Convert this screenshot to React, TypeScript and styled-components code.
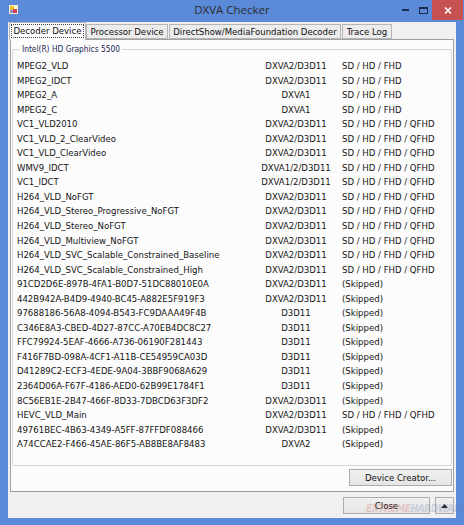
import React from "react";
import styled, { createGlobalStyle } from "styled-components";

const Global = createGlobalStyle`
  html, body { margin: 0; padding: 0; }
  body { width: 464px; height: 525px; overflow: hidden; background: #5a8ad8; }
`;

const UI = `"DejaVu Sans Condensed", "DejaVu Sans", "Liberation Sans", sans-serif`;

const Window = styled.div`
  width: 464px;
  height: 525px;
  box-sizing: border-box;
  background: #5a8ad8;
  padding: 0 8px 7px 8px;
  display: flex;
  flex-direction: column;
  position: relative;
  font-family: ${UI};
  font-stretch: condensed;
`;

const TitleBar = styled.div`
  height: 22px;
  flex: none;
  display: flex;
  align-items: center;
  position: relative;
`;

const AppIcon = styled.svg`
  width: 9px;
  height: 9px;
  margin-left: 1px;
  margin-top: -3px;
`;

const Title = styled.div`
  position: absolute;
  left: 0;
  right: 0;
  top: 2px;
  text-align: center;
  font-family: "Open Sans", "Noto Sans", sans-serif;
  font-stretch: normal;
  font-size: 11.5px;
  color: #2b2b2b;
`;

const Caption = styled.div`
  margin-left: auto;
  margin-right: -7px;
  align-self: flex-start;
  display: flex;
  height: 20px;
`;

const CapBtn = styled.div<{ $close?: boolean; $w: number }>`
  width: ${(p) => p.$w}px;
  height: 20px;
  display: flex;
  align-items: center;
  justify-content: center;
  background: ${(p) => (p.$close ? "#c75050" : "transparent")};
`;

const Client = styled.div`
  flex: 1;
  background: #f0f0f0;
  display: flex;
  flex-direction: column;
  padding: 0 2px;
`;

const TabStrip = styled.div`
  display: flex;
  align-items: flex-end;
  height: 17px;
  flex: none;
  margin-left: -1px;
  position: relative;
  z-index: 1;
`;

const Tab = styled.div<{ $active?: boolean; $w: number }>`
  box-sizing: border-box;
  flex: none;
  width: ${(p) => p.$w}px;
  height: ${(p) => (p.$active ? 18 : 15)}px;
  margin-bottom: ${(p) => (p.$active ? -1 : 0)}px;
  margin-right: ${(p) => (p.$active ? 0 : 1)}px;
  border: 1px solid #b5b5b5;
  border-bottom: ${(p) => (p.$active ? "none" : "1px solid #b5b5b5")};
  background: ${(p) => (p.$active ? "#fcfcfc" : "#ececec")};
  font-size: 9.5px;
  white-space: nowrap;
  color: #111;
  display: flex;
  align-items: center;
  justify-content: center;
  padding-bottom: ${(p) => (p.$active ? 2 : 0)}px;
`;

const Focus = styled.span`
  border: 1px dotted #444;
  padding: 0 2px;
  line-height: 12px;
`;

const Panel = styled.div`
  box-sizing: border-box;
  height: 453px;
  flex: none;
  border: 1px solid #a0a0a0;
  background: #fcfcfc;
  display: flex;
  flex-direction: column;
  padding: 9px 1px 0 1px;
`;

const Group = styled.div`
  position: relative;
  box-sizing: border-box;
  height: 417px;
  flex: none;
  padding: 9px 0 0 4px;
  border: 1px solid #d5d5d5;
  border-radius: 2px;
`;

const Legend = styled.div`
  position: absolute;
  left: 7px;
  top: -7px;
  background: #fcfcfc;
  font-size: 8.3px;
  line-height: 12px;
  color: #202850;
  padding: 0 2px;
`;

const Grid = styled.div`
  display: grid;
  grid-template-columns: 233px 92px 1fr;
  font-size: 9.5px;
  color: #141414;
  line-height: 14.54px;
`;

const Cell = styled.div<{ $center?: boolean }>`
  white-space: nowrap;
  text-align: ${(p) => (p.$center ? "center" : "left")};
`;

const PanelFooter = styled.div`
  display: flex;
  justify-content: flex-end;
  padding: 3px 0 0 0;
`;

const Button = styled.div<{ $w: number }>`
  box-sizing: border-box;
  width: ${(p) => p.$w}px;
  height: 17px;
  border: 1px solid #acacac;
  background: linear-gradient(#f0f0f0, #e5e5e5);
  font-size: 9.5px;
  color: #111;
  display: flex;
  align-items: center;
  justify-content: center;
`;

const BottomBar = styled.div`
  display: flex;
  justify-content: flex-end;
  gap: 5px;
  padding: 5px 0 0 0;
`;

const Watermark = styled.div`
  position: absolute;
  left: 366px;
  top: 503px;
  font-family: "DejaVu Sans Condensed", "DejaVu Sans", sans-serif;
  font-stretch: condensed;
  font-weight: bold;
  font-style: italic;
  font-size: 10px;
  letter-spacing: -0.4px;
  opacity: 0.25;
  pointer-events: none;
  white-space: nowrap;
`;

const WmPart = styled.span<{ $c: string }>`
  color: ${(p) => p.$c};
`;

const rows: [string, string, string][] = [
  ["MPEG2_VLD", "DXVA2/D3D11", "SD / HD / FHD"],
  ["MPEG2_IDCT", "DXVA2/D3D11", "SD / HD / FHD"],
  ["MPEG2_A", "DXVA1", "SD / HD / FHD"],
  ["MPEG2_C", "DXVA1", "SD / HD / FHD"],
  ["VC1_VLD2010", "DXVA2/D3D11", "SD / HD / FHD / QFHD"],
  ["VC1_VLD_2_ClearVideo", "DXVA2/D3D11", "SD / HD / FHD / QFHD"],
  ["VC1_VLD_ClearVideo", "DXVA2/D3D11", "SD / HD / FHD / QFHD"],
  ["WMV9_IDCT", "DXVA1/2/D3D11", "SD / HD / FHD / QFHD"],
  ["VC1_IDCT", "DXVA1/2/D3D11", "SD / HD / FHD / QFHD"],
  ["H264_VLD_NoFGT", "DXVA2/D3D11", "SD / HD / FHD / QFHD"],
  ["H264_VLD_Stereo_Progressive_NoFGT", "DXVA2/D3D11", "SD / HD / FHD / QFHD"],
  ["H264_VLD_Stereo_NoFGT", "DXVA2/D3D11", "SD / HD / FHD / QFHD"],
  ["H264_VLD_Multiview_NoFGT", "DXVA2/D3D11", "SD / HD / FHD / QFHD"],
  ["H264_VLD_SVC_Scalable_Constrained_Baseline", "DXVA2/D3D11", "SD / HD / FHD / QFHD"],
  ["H264_VLD_SVC_Scalable_Constrained_High", "DXVA2/D3D11", "SD / HD / FHD / QFHD"],
  ["91CD2D6E-897B-4FA1-B0D7-51DC88010E0A", "DXVA2/D3D11", "(Skipped)"],
  ["442B942A-B4D9-4940-BC45-A882E5F919F3", "DXVA2/D3D11", "(Skipped)"],
  ["97688186-56A8-4094-B543-FC9DAAA49F4B", "D3D11", "(Skipped)"],
  ["C346E8A3-CBED-4D27-87CC-A70EB4DC8C27", "D3D11", "(Skipped)"],
  ["FFC79924-5EAF-4666-A736-06190F281443", "D3D11", "(Skipped)"],
  ["F416F7BD-098A-4CF1-A11B-CE54959CA03D", "D3D11", "(Skipped)"],
  ["D41289C2-ECF3-4EDE-9A04-3BBF9068A629", "D3D11", "(Skipped)"],
  ["2364D06A-F67F-4186-AED0-62B99E1784F1", "D3D11", "(Skipped)"],
  ["8C56EB1E-2B47-466F-8D33-7DBCD63F3DF2", "DXVA2/D3D11", "(Skipped)"],
  ["HEVC_VLD_Main", "DXVA2/D3D11", "SD / HD / FHD / QFHD"],
  ["49761BEC-4B63-4349-A5FF-87FFDF088466", "DXVA2/D3D11", "(Skipped)"],
  ["A74CCAE2-F466-45AE-86F5-AB8BE8AF8483", "DXVA2", "(Skipped)"],
];

export default function App() {
  return (
    <>
      <Global />
      <Window>
        <TitleBar>
          <AppIcon viewBox="0 0 9 9">
            <rect x="0" y="0" width="9" height="9" fill="#f4f0c8" />
            <rect x="1" y="1" width="4" height="4" fill="#e8c030" />
            <rect x="4" y="4" width="4" height="4" fill="#d04060" />
            <rect x="1" y="5" width="3" height="3" fill="#9090d0" />
          </AppIcon>
          <Title>DXVA Checker</Title>
          <Caption>
            <CapBtn $w={18}>
              <svg width="7" height="2"><rect width="7" height="2" fill="#1a2a4a" /></svg>
            </CapBtn>
            <CapBtn $w={18}>
              <svg width="9" height="7"><rect x="0.5" y="0.5" width="8" height="6" fill="none" stroke="#1a2a4a" /><rect x="0" y="0" width="9" height="2" fill="#1a2a4a" /></svg>
            </CapBtn>
            <CapBtn $w={31} $close>
              <svg width="8" height="7" viewBox="0 0 8 7"><path d="M1 0.5 L7 6.5 M7 0.5 L1 6.5" stroke="#fff" strokeWidth="1.6" /></svg>
            </CapBtn>
          </Caption>
        </TitleBar>
        <Client>
          <TabStrip>
            <Tab $active $w={77}><Focus>Decoder Device</Focus></Tab>
            <Tab $w={82}>Processor Device</Tab>
            <Tab $w={172}>DirectShow/MediaFoundation Decoder</Tab>
            <Tab $w={50}>Trace Log</Tab>
          </TabStrip>
          <Panel>
            <Group>
              <Legend>Intel(R) HD Graphics 5500</Legend>
              <Grid>
                {rows.map((r, i) => (
                  <React.Fragment key={i}>
                    <Cell>{r[0]}</Cell>
                    <Cell $center>{r[1]}</Cell>
                    <Cell>{r[2]}</Cell>
                  </React.Fragment>
                ))}
              </Grid>
            </Group>
            <PanelFooter>
              <Button $w={103}>Device Creator...</Button>
            </PanelFooter>
          </Panel>
          <BottomBar>
            <Button $w={87}>Close</Button>
            <Button $w={19}>
              <svg width="7" height="4"><path d="M0 4 L3.5 0 L7 4 Z" fill="#222" /></svg>
            </Button>
          </BottomBar>
        </Client>
        <Watermark>
          <WmPart $c="#d06060">EXTREME</WmPart>
          <WmPart $c="#6080b0">HARDWARE</WmPart>
        </Watermark>
      </Window>
    </>
  );
}
